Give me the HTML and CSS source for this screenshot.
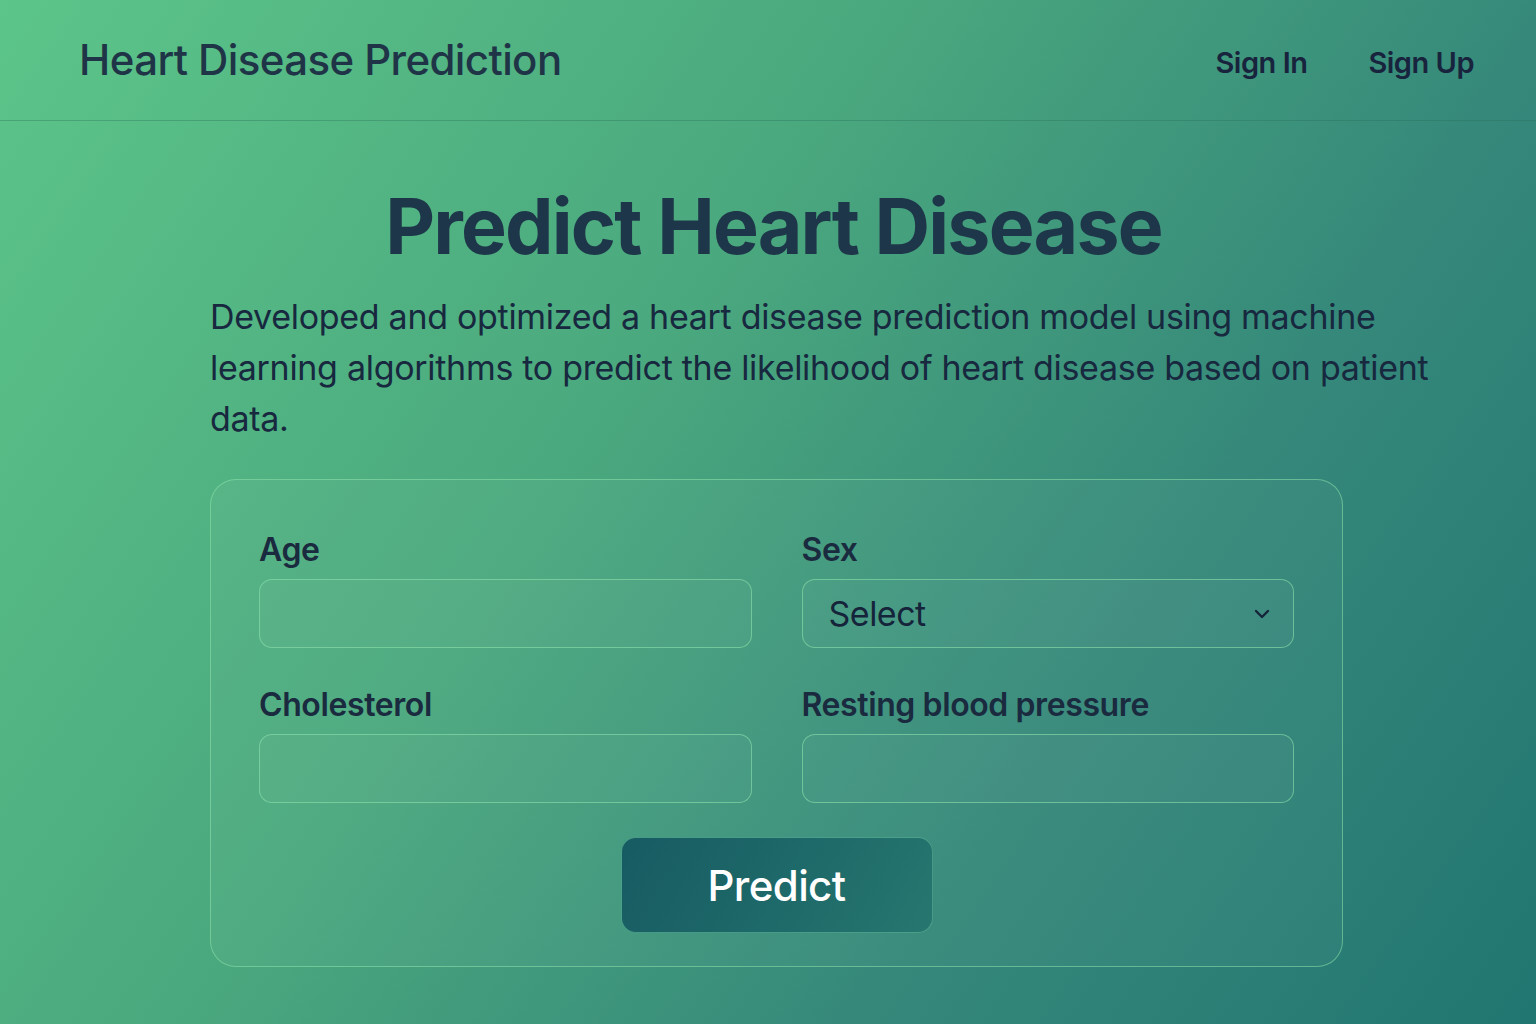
FILE: index.html
```html
<!DOCTYPE html>
<html lang="en">
<head>
<meta charset="utf-8">
<title>Heart Disease Prediction</title>
<link rel="stylesheet" href="styles.css">
</head>
<body>
<header class="topbar">
  <div class="brand">Heart Disease Prediction</div>
  <nav class="nav">
    <a class="nav-link" href="#">Sign In</a>
    <a class="nav-link" href="#">Sign Up</a>
  </nav>
</header>
<main class="main">
  <h1 class="title">Predict Heart Disease</h1>
  <p class="intro">Developed and optimized a heart disease prediction model using machine learning algorithms to predict the likelihood of heart disease based on patient data.</p>
  <form class="card">
    <div class="grid">
      <div class="field">
        <label class="label">Age</label>
        <div class="input"></div>
      </div>
      <div class="field">
        <label class="label">Sex</label>
        <div class="input select">
          <span class="select-text">Select</span>
          <svg class="chev" width="18" height="12" viewBox="0 0 18 12"><path d="M3 3 L9 9 L15 3" fill="none" stroke="#15243a" stroke-width="2.4" stroke-linecap="round" stroke-linejoin="round"/></svg>
        </div>
      </div>
      <div class="field">
        <label class="label">Cholesterol</label>
        <div class="input"></div>
      </div>
      <div class="field">
        <label class="label">Resting blood pressure</label>
        <div class="input"></div>
      </div>
    </div>
    <div class="actions">
      <button class="btn" type="button">Predict</button>
    </div>
  </form>
</main>
</body>
</html>
```
FILE: styles.css
```css
* { box-sizing: border-box; }
html, body { margin: 0; padding: 0; }
body {
  min-height: 1024px;
  font-family: Inter, "Noto Sans", "Liberation Sans", sans-serif;
  background: linear-gradient(125deg, #5cc589 0%, #4aa87e 40%, #35887a 70%, #217671 100%);
  color: #1b2f42;
}
.topbar {
  height: 121px;
  display: flex;
  align-items: center;
  justify-content: space-between;
  padding: 0 62px 0 79px;
  border-bottom: 1px solid rgba(40, 110, 90, 0.35);
}
.brand {
  font-size: 42px;
  font-weight: 500;
  letter-spacing: -0.6px;
  color: #1f3447;
  margin-top: -2px;
}
.nav { display: flex; gap: 61px; margin-top: 4px; }
.nav-link {
  font-size: 29px;
  font-weight: 600;
  letter-spacing: -0.5px;
  color: #18243d;
  text-decoration: none;
}
.main {
  width: 1133px;
  margin-left: 210px;
  padding-top: 56px;
}
.title {
  margin: 0;
  text-align: center;
  font-size: 77px;
  font-weight: 700;
  letter-spacing: -1.8px;
  line-height: 98px;
  color: #1e3649;
  padding-right: 6px;
}
.intro {
  width: 1240px;
  margin: 16px 0 0 0;
  font-size: 34px;
  line-height: 51px;
  font-weight: 400;
  letter-spacing: -0.3px;
  color: #17283f;
}
.card {
  margin-top: 35px;
  border: 1.5px solid rgba(140, 225, 170, 0.55);
  border-radius: 26px;
  background: rgba(255, 255, 255, 0.035);
  padding: 50px 48px 33px 48px;
}
.grid {
  display: grid;
  grid-template-columns: 1fr 1fr;
  column-gap: 50px;
  row-gap: 37px;
}
.field { display: flex; flex-direction: column; }
.label {
  font-size: 32px;
  font-weight: 600;
  letter-spacing: -0.4px;
  color: #1a2a3f;
  line-height: 40px;
  margin-bottom: 9px;
}
.input {
  height: 69px;
  border: 1.5px solid rgba(140, 225, 170, 0.6);
  border-radius: 13px;
  background: rgba(255, 255, 255, 0.03);
}
.select {
  display: flex;
  align-items: center;
  justify-content: space-between;
  padding: 0 22px 0 26px;
}
.select-text {
  font-size: 34px;
  letter-spacing: -0.5px;
  color: #15243a;
}
.chev { display: block; }
.actions {
  display: flex;
  justify-content: center;
  margin-top: 34px;
}
.btn {
  width: 312px;
  height: 96px;
  border: 1.5px solid rgba(90, 180, 150, 0.7);
  border-radius: 15px;
  background: linear-gradient(120deg, #175b62 0%, #1f6b6a 60%, #27776f 100%);
  color: #ffffff;
  font-family: Inter, "Noto Sans", "Liberation Sans", sans-serif;
  font-size: 42px;
  font-weight: 500;
  letter-spacing: -0.6px;
  cursor: pointer;
}
```
